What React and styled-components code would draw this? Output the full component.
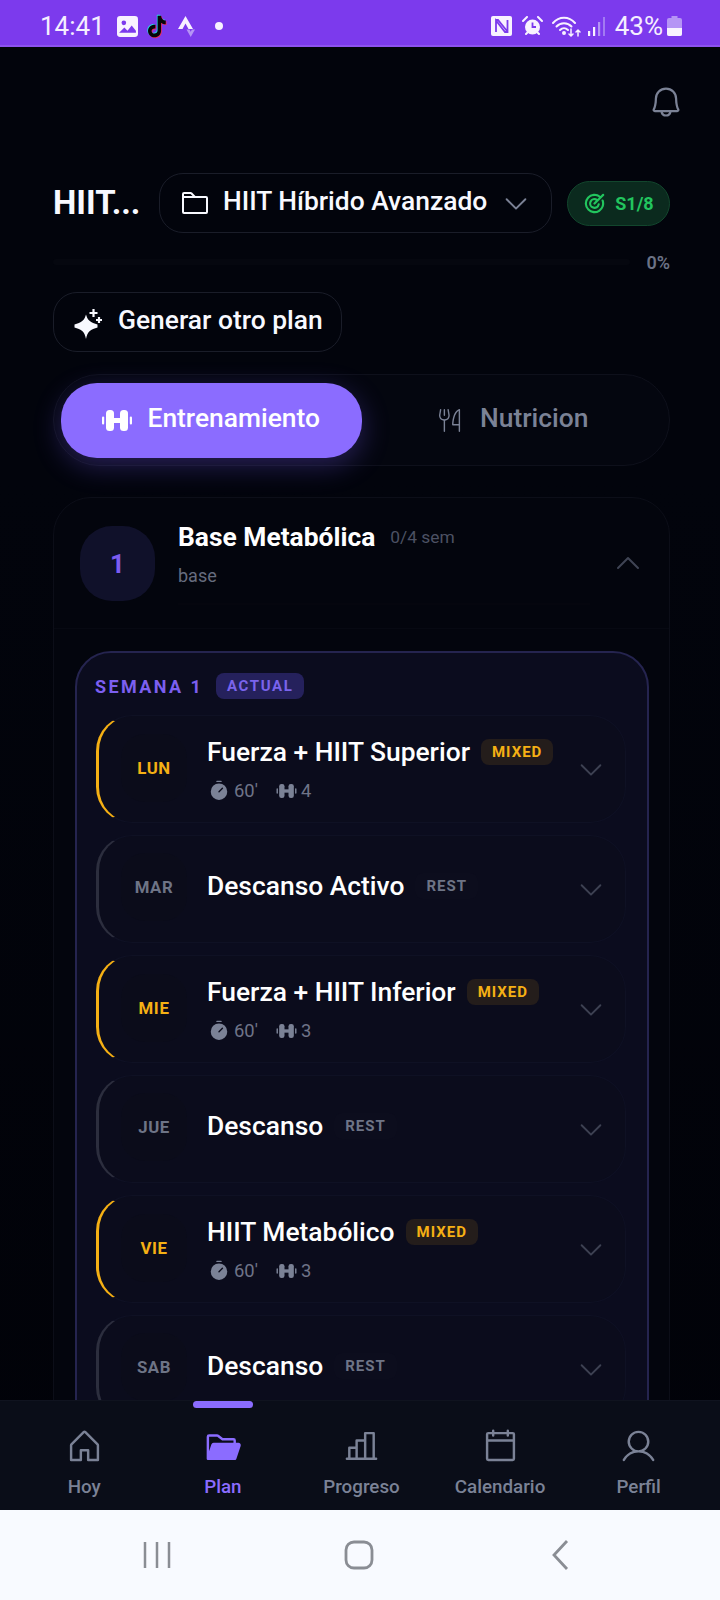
import React from "react";
import styled, { createGlobalStyle } from "styled-components";
import {
  PiBell, PiFolder, PiCaretDown, PiCaretUp, PiTargetBold, PiForkKnifeLight,
  PiTimerFill, PiHouse, PiFolderOpenFill, PiChartBar, PiCalendarBlank, PiUser,
} from "react-icons/pi";

const Global = createGlobalStyle`
  html, body { margin: 0; padding: 0; background: #02040c; }
  * { box-sizing: border-box; }
  body { font-family: Roboto, "Liberation Sans", sans-serif; }
`;

const Screen = styled.div`
  width: 720px; height: 1600px; display: flex; flex-direction: column; overflow: hidden;
  background: linear-gradient(180deg, #02040c 0%, #02040c 30%, #010208 100%);
`;

const StatusBar = styled.div`
  height: 47px; flex: none; display: flex; align-items: center; justify-content: space-between;
  padding: 7px 38px 0 40px; background: #7c3aed; border-bottom: 2px solid #8d52f0; color: #f5eeff;
`;
const StatusGroup = styled.div`display: flex; align-items: center;`;
const StatusText = styled.span`font-size: 26px; line-height: 28px; font-weight: 400;`;
const StatusSlot = styled.span`display: flex; margin-left: ${(p) => p.$gap}px;`;

const Main = styled.main`flex: 1; min-height: 0; overflow: hidden; padding: 0 50px 0 53px;`;

const BellRow = styled.div`
  height: 73px; padding-top: 37px; margin-bottom: 53px; display: flex; justify-content: flex-end;
  color: #7b8296; margin-right: -14px; font-size: 36px;
`;

const TitleRow = styled.div`display: flex; align-items: center; height: 60px;`;
const PlanTitle = styled.h1`
  margin: 0 0 2px; width: 88px; flex: none; font-size: 33px; font-weight: 700; color: #f8f9ff; white-space: nowrap;
`;
const Selector = styled.div`
  margin-left: 18px; width: 393px; height: 60px; flex: none; display: flex; align-items: center;
  padding-left: 19px; border: 1px solid #1a1d29; border-radius: 24px; color: #f8f9ff;
`;
const SelectorLabel = styled.span`font-size: 26.4px; line-height: 30px; font-weight: 500; margin: 0 0 4px 12px; white-space: nowrap;`;
const SelectorCaret = styled.span`display: flex; margin-left: 14px; color: #7b8296;`;
const WeekBadge = styled.div`
  margin-left: 15px; width: 103px; height: 45px; flex: none; display: flex; align-items: center; justify-content: center; gap: 9px;
  background: #0b2a1e; border: 1px solid #12462d; border-radius: 23px; color: #22c55e; font-size: 18px; font-weight: 700;
`;

const ProgressRow = styled.div`display: flex; align-items: center; margin-top: 20px; height: 18px;`;
const Track = styled.div`flex: 1; height: 6px; border-radius: 3px; background: #05070f; margin-right: 16px;`;
const Percent = styled.span`font-size: 18px; font-weight: 600; color: #6b7285;`;

const GenerateButton = styled.button`
  margin-top: 21px; width: 289px; height: 60px; display: flex; align-items: center; gap: 16px; padding: 0 0 4px 20px;
  background: transparent; border: 1px solid #1a1d29; border-radius: 24px; color: #f8f9ff;
  font-family: inherit; font-size: 26.4px; font-weight: 500;
  svg { margin-top: 4px; }
`;

const Tabs = styled.div`
  margin-top: 22px; height: 92px; display: flex; align-items: center; padding: 0 7px;
  border: 1px solid #0e101b; border-radius: 46px; background: #04060f;
`;
const Tab = styled.div`
  width: 301px; height: 75px; display: flex; align-items: center; justify-content: center; gap: 15px;
  border-radius: 36px; padding-bottom: 4px; font-size: 26.4px; font-weight: 500;
  color: ${(p) => (p.$active ? "#ffffff" : "#7b8296")};
  background: ${(p) => (p.$active ? "#8b6cff" : "transparent")};
  box-shadow: ${(p) => (p.$active ? "0 8px 28px rgba(124, 92, 255, 0.3)" : "none")};
  svg { margin-top: 4px; }
`;

const PhaseCard = styled.section`
  margin-top: 31px; height: 1000px; border: 1px solid #0c0e18; border-radius: 38px; background: #03050d;
`;
const PhaseHeader = styled.div`
  display: flex; align-items: flex-start; height: 131px; padding: 28px 25.500px 0 26px; border-bottom: 1px solid #070912;
`;
const PhaseNumber = styled.div`
  width: 75px; height: 75px; flex: none; display: flex; align-items: center; justify-content: center;
  border-radius: 32px; background: #10112a; color: #7c5cf0; font-size: 26px; font-weight: 700;
`;
const PhaseInfo = styled.div`margin-left: 23px; flex: 1; margin-top: -2px;`;
const PhaseTitleLine = styled.div`display: flex; align-items: center; gap: 15px; height: 26px;`;
const PhaseName = styled.span`font-size: 26.4px; font-weight: 700; color: #fff; white-space: nowrap;`;
const PhaseWeeks = styled.span`font-size: 17.4px; color: #4c5163;`;
const PhaseType = styled.div`margin-top: 14px; font-size: 18px; line-height: 24px; color: #666c7e;`;
const PhaseBar = styled.div`margin-top: 15px; width: 412px; height: 2px; background: #05060e;`;
const PhaseCaret = styled.span`display: flex; margin-top: 22px; color: #3f4454;`;

const WeekWrap = styled.div`padding: 22px 20px 0 21px;`;
const WeekCard = styled.div`
  padding: 20px 21px 0 18px; border: 2px solid #25244f; border-radius: 36px; background: #0b0c1e; height: 900px;
`;
const WeekHead = styled.div`display: flex; align-items: center; gap: 13px; height: 26px; margin-bottom: 16px;`;
const WeekLabel = styled.span`font-size: 18px; font-weight: 700; letter-spacing: 2.4px; color: #7c5ff0;`;
const CurrentTag = styled.span`
  width: 88px; height: 26px; display: flex; align-items: center; justify-content: center; border-radius: 8px;
  background: #25215c; color: #7a64ec; font-size: 15px; font-weight: 700; letter-spacing: 1.6px;
`;
const DayList = styled.div`display: flex; flex-direction: column; gap: 12px; margin-left: 1px;`;
const Day = styled.article`
  height: 108px; display: flex; align-items: center; padding: 0 19.5px 0 22px; background: #0b0c1c;
  border: 1px solid #0f1124; border-left: 3px solid ${(p) => (p.$rest ? "#2c2e3e" : "#f5b014")};
  border-radius: 36px;
`;
const DayLabel = styled.div`
  width: 66px; height: 68px; flex: none; display: flex; align-items: center; justify-content: center;
  border-radius: 24px; background: #0b0c1a; font-size: 16.8px; font-weight: 700; letter-spacing: 0.6px;
  margin-bottom: ${(p) => (p.$rest ? 4 : 2)}px;
  color: ${(p) => (p.$rest ? "#6e7486" : "#f5b014")};
`;
const DayBody = styled.div`
  margin: 0 0 ${(p) => (p.$rest ? 6 : 0)}px 20px; flex: 1; min-width: 0; display: flex; flex-direction: column; gap: 12px;
`;
const DayTitleLine = styled.div`display: flex; align-items: center; gap: 11px;`;
const DayName = styled.span`font-size: 26.4px; line-height: 32px; font-weight: 500; color: #fff; white-space: nowrap;`;
const TypeTag = styled.span`
  height: 26px; display: flex; align-items: center; padding: 0 11px; border-radius: 8px; font-size: 15px; font-weight: 700; letter-spacing: 1px;
  color: ${(p) => (p.$rest ? "#6e7486" : "#f5b014")};
  background: ${(p) => (p.$rest ? "#0c0d1d" : "#241d1b")};
`;
const Meta = styled.div`display: flex; align-items: center; margin-left: 1px; color: #6f7488; font-size: 18.4px; line-height: 22px;`;
const MetaItem = styled.span`display: flex; align-items: center; gap: 4px; margin-right: 18px; svg { color: #7b8296; }`;
const DayCaret = styled.span`display: flex; color: #3d4152;`;

const BottomNav = styled.nav`
  height: 110px; flex: none; display: flex; padding: 0 12px 0 15px; background: #0a0d18; border-top: 1px solid #10131f;
`;
const NavItem = styled.div`
  flex: 1; display: flex; flex-direction: column; align-items: center; padding-top: 26px; position: relative;
  color: ${(p) => (p.$active ? "#8b6cff" : "#7b8296")};
  font-size: 39px;
`;
const NavIndicator = styled.span`
  position: absolute; top: 0; left: 39.500px; width: 60px; height: 7px; border-radius: 4px; background: #8b6cff;
`;
const NavLabel = styled.span`margin-top: 9px; font-size: 18.800px; line-height: 24px; font-weight: 500;`;

const SystemBar = styled.div`
  height: 90px; flex: none; display: flex; align-items: center; padding: 0 59px 0 56px; background: #f8faff; color: #8a8d94;
`;
const SystemSlot = styled.div`flex: 1; display: flex; justify-content: center;`;

const ImageIcon = () => (
  <svg width="21" height="21" viewBox="0 0 20 20"><rect width="20" height="20" rx="3" fill="#f8f2ff" /><circle cx="6.500" cy="6.500" r="2.200" fill="#7c3aed" /><path d="M2 16l5-5 3 3 4-5 4 5v2H2z" fill="#7c3aed" /></svg>
);
const TikTokIcon = () => {
  const d = "M11.500 2h3.200c.3 2.600 1.800 4.200 4.300 4.500v3.400c-1.600 0-3-.5-4.300-1.400v7.200c0 3.700-2.700 6.300-6 6.300s-6-2.600-6-5.900c0-3.500 3-6.100 6.800-5.700v3.500c-2-.4-3.500.7-3.500 2.200 0 1.400 1.100 2.400 2.600 2.400s2.900-1 2.900-3V2z";
  return (
    <svg width="21" height="25" viewBox="1.500 0.500 18 23"><path d={d} fill="#25d5e5" transform="translate(-.7 -.7)" /><path d={d} fill="#ee2a5a" transform="translate(.7 .7)" /><path d={d} fill="#06060a" /></svg>
  );
};
const StravaIcon = () => (
  <svg width="17" height="21" viewBox="0 0 17 21"><path d="M7.500 0L15 13h-4.500L7.500 7.500 4.500 13H0z" fill="#f8f2ff" /><path d="M8.500 13.500h3l1.200 2.200 1.200-2.200H17L12.700 21z" fill="#b594f5" /></svg>
);
const DotIcon = () => <svg width="8" height="8" viewBox="0 0 8 8"><circle cx="4" cy="4" r="4" fill="#f8f2ff" /></svg>;
const NfcIcon = () => (
  <svg width="21" height="20" viewBox="0 0 21 20"><rect width="21" height="20" rx="2" fill="#f8f2ff" /><path d="M5 16V4.500l9 11.500h2.500V4M5 4h2l9 11" fill="none" stroke="#7c3aed" strokeWidth="1.800" /></svg>
);
const AlarmIcon = () => (
  <svg width="21" height="20" viewBox="0 0 21 20"><circle cx="10.500" cy="11" r="7.500" fill="#f8f2ff" /><path d="M10.500 6.500V11h3.500" fill="none" stroke="#7c3aed" strokeWidth="1.800" /><path d="M1 5l4-4M20 5l-4-4M4 18l2-2M17 18l-2-2" stroke="#f8f2ff" strokeWidth="2" strokeLinecap="round" /></svg>
);
const WifiIcon = () => (
  <svg width="29" height="22" viewBox="0 0 29 22" fill="none" stroke="#f8f2ff" strokeWidth="2" strokeLinecap="round"><path d="M1 8c6-7 16-7 22 0" /><path d="M4.500 11.500c4-4.500 11-4.500 15 0" /><path d="M8 15c2.500-2.500 5.500-2.500 8 0" /><circle cx="12" cy="18" r="1" fill="#f8f2ff" /><path d="M19 14v7M17 19l2 2 2-2M26 21v-6M24 17l2-2 2 2" strokeWidth="1.500" /></svg>
);
const SignalIcon = () => (
  <svg width="17" height="19" viewBox="0 0 17 19"><rect x="0" y="14" width="2.200" height="5" fill="#f8f2ff" /><rect x="5" y="10" width="2.200" height="9" fill="#f8f2ff" /><rect x="10" y="5" width="2.200" height="14" fill="#b594f5" /><rect x="15" y="0" width="2" height="19" fill="#a27af2" /></svg>
);
const BatteryIcon = () => (
  <svg width="15" height="20" viewBox="0 0 15 20"><path d="M4.500 0h6v2H13a2 2 0 012 2v14a2 2 0 01-2 2H2a2 2 0 01-2-2V4a2 2 0 012-2h2.500z" fill="#b594f5" /><path d="M0 12h15v6a2 2 0 01-2 2H2a2 2 0 01-2-2z" fill="#f8f2ff" /></svg>
);
const Sparkles = () => (
  <svg width="28" height="33" viewBox="0 0 28 33" fill="currentColor">
    <path d="M12 8.500c.8 2.500 1.500 4.500 3.500 6.300 2 1.700 5 3 8 3.700v3c-3 .7-6 2-8 3.700-2 1.800-2.700 4-3.500 7.800-.8-3.800-1.500-6-3.500-7.800-2-1.700-5-3-8-3.700v-3c3-.7 6-2 8-3.700 2-1.800 2.700-3.800 3.500-6.300z" />
    <path d="M19.500 3v8M15.500 7h8M25 11v6M22 14h6" stroke="currentColor" strokeWidth="2.200" fill="none" />
  </svg>
);
const Dumbbell = ({ width, height }) => (
  <svg width={width} height={height} viewBox="0 0 30 21" fill="currentColor">
    <rect x="0" y="6.500" width="2.200" height="8" rx="1.100" />
    <rect x="4" y="0" width="8" height="21" rx="3.500" />
    <rect x="11" y="8" width="8" height="5" />
    <rect x="18" y="0" width="8" height="21" rx="3.500" />
    <rect x="27.800" y="6.500" width="2.200" height="8" rx="1.100" />
  </svg>
);

const days = [
  { day: "LUN", name: "Fuerza + HIIT Superior", sets: 4 },
  { day: "MAR", name: "Descanso Activo", rest: true },
  { day: "MIE", name: "Fuerza + HIIT Inferior", sets: 3 },
  { day: "JUE", name: "Descanso", rest: true },
  { day: "VIE", name: "HIIT Metabólico", sets: 3 },
  { day: "SAB", name: "Descanso", rest: true },
];

const navItems = [
  { label: "Hoy", Icon: PiHouse },
  { label: "Plan", Icon: PiFolderOpenFill, active: true },
  { label: "Progreso", Icon: PiChartBar },
  { label: "Calendario", Icon: PiCalendarBlank },
  { label: "Perfil", Icon: PiUser },
];

export default function App() {
  return (
    <Screen>
      <Global />
      <StatusBar>
        <StatusGroup>
          <StatusText>14:41</StatusText>
          <StatusSlot $gap={12}><ImageIcon /></StatusSlot>
          <StatusSlot $gap={8}><TikTokIcon /></StatusSlot>
          <StatusSlot $gap={11}><StravaIcon /></StatusSlot>
          <StatusSlot $gap={20}><DotIcon /></StatusSlot>
        </StatusGroup>
        <StatusGroup>
          <StatusSlot $gap={0}><NfcIcon /></StatusSlot>
          <StatusSlot $gap={10}><AlarmIcon /></StatusSlot>
          <StatusSlot $gap={9}><WifiIcon /></StatusSlot>
          <StatusSlot $gap={7}><SignalIcon /></StatusSlot>
          <StatusSlot $gap={10}><StatusText>43%</StatusText></StatusSlot>
          <StatusSlot $gap={4}><BatteryIcon /></StatusSlot>
        </StatusGroup>
      </StatusBar>

      <Main>
        <BellRow><PiBell /></BellRow>
        <TitleRow>
          <PlanTitle>HIIT...</PlanTitle>
          <Selector>
            <PiFolder size={32} />
            <SelectorLabel>HIIT Híbrido Avanzado</SelectorLabel>
            <SelectorCaret><PiCaretDown size={30} /></SelectorCaret>
          </Selector>
          <WeekBadge><PiTargetBold size={23} />S1/8</WeekBadge>
        </TitleRow>
        <ProgressRow><Track /><Percent>0%</Percent></ProgressRow>
        <GenerateButton><Sparkles />Generar otro plan</GenerateButton>
        <Tabs>
          <Tab $active><Dumbbell width={30} height={21} />Entrenamiento</Tab>
          <Tab><PiForkKnifeLight size={30} />Nutricion</Tab>
        </Tabs>
        <PhaseCard>
          <PhaseHeader>
            <PhaseNumber>1</PhaseNumber>
            <PhaseInfo>
              <PhaseTitleLine>
                <PhaseName>Base Metabólica</PhaseName>
                <PhaseWeeks>0/4 sem</PhaseWeeks>
              </PhaseTitleLine>
              <PhaseType>base</PhaseType>
              <PhaseBar />
            </PhaseInfo>
            <PhaseCaret><PiCaretUp size={32} /></PhaseCaret>
          </PhaseHeader>
          <WeekWrap>
            <WeekCard>
              <WeekHead>
                <WeekLabel>SEMANA 1</WeekLabel>
                <CurrentTag>ACTUAL</CurrentTag>
              </WeekHead>
              <DayList>
                {days.map((d) => (
                  <Day key={d.day} $rest={d.rest}>
                    <DayLabel $rest={d.rest}>{d.day}</DayLabel>
                    <DayBody $rest={d.rest}>
                      <DayTitleLine>
                        <DayName>{d.name}</DayName>
                        <TypeTag $rest={d.rest}>{d.rest ? "REST" : "MIXED"}</TypeTag>
                      </DayTitleLine>
                      {!d.rest && (
                        <Meta>
                          <MetaItem><PiTimerFill size={22} />60'</MetaItem>
                          <MetaItem><Dumbbell width={21} height={14} />{d.sets}</MetaItem>
                        </Meta>
                      )}
                    </DayBody>
                    <DayCaret><PiCaretDown size={30} /></DayCaret>
                  </Day>
                ))}
              </DayList>
            </WeekCard>
          </WeekWrap>
        </PhaseCard>
      </Main>

      <BottomNav>
        {navItems.map(({ label, Icon, active }) => (
          <NavItem key={label} $active={active}>
            {active && <NavIndicator />}
            <Icon />
            <NavLabel>{label}</NavLabel>
          </NavItem>
        ))}
      </BottomNav>

      <SystemBar>
        <SystemSlot>
          <svg width="28" height="28" viewBox="0 0 28 28" stroke="currentColor" strokeWidth="2.500"><path d="M2 1v26M14 1v26M26 1v26" /></svg>
        </SystemSlot>
        <SystemSlot>
          <svg width="30" height="30" viewBox="0 0 30 30" fill="none" stroke="currentColor" strokeWidth="2.800"><rect x="2" y="2" width="26" height="26" rx="8" /></svg>
        </SystemSlot>
        <SystemSlot>
          <svg width="18" height="30" viewBox="0 0 18 30" fill="none" stroke="currentColor" strokeWidth="2.800"><path d="M16 1L3 15l13 14" /></svg>
        </SystemSlot>
      </SystemBar>
    </Screen>
  );
}
